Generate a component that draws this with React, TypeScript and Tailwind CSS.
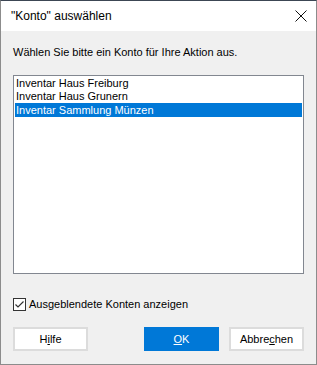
import React from "react";

export default function App() {
  const items = ["Inventar Haus Freiburg", "Inventar Haus Grunern", "Inventar Sammlung Münzen"];
  return (
    <div
      className="w-[317px] h-[365px] flex flex-col bg-[#f0f0f0] border border-[#8c8c8c] border-t-[#3c4654] text-[11px] text-black leading-none"
      style={{ fontFamily: '"Liberation Sans", Arial, sans-serif' }}
    >
      <div className="h-[30px] bg-white flex items-center justify-between pl-[10px] pr-[6px] shrink-0">
        <span className="text-[12px]">"Konto" auswählen</span>
        <svg width="16" height="16" viewBox="0 0 16 16" className="mr-[1px]">
          <path d="M2.5 2.5 L13.5 13.5 M13.5 2.5 L2.5 13.5" stroke="#111" strokeWidth="1" />
        </svg>
      </div>
      <div className="flex-1 flex flex-col px-[12px]">
        <div className="mt-[15px] h-[13px] flex items-center">Wählen Sie bitte ein Konto für Ihre Aktion aus.</div>
        <div className="mt-[16px] h-[199px] border border-[#828790] bg-white px-[1px] pt-[1px] flex flex-col">
          {items.map((t, i) => (
            <div
              key={t}
              className={
                "h-[13px] shrink-0 flex items-center pl-[1px] " +
                (i === 2 ? "bg-[#0078d7] text-white h-[14px]" : "")
              }
            >
              {t}
            </div>
          ))}
        </div>
        <div className="mt-[24px] flex items-center gap-[3px]">
          <div className="w-[13px] h-[13px] border border-[#333] bg-white flex items-center justify-center">
            <svg width="11" height="11" viewBox="0 0 11 11">
              <path d="M1.5 5.5 L4 8 L9.5 2.5" stroke="#333" strokeWidth="1.2" fill="none" />
            </svg>
          </div>
          <span>Ausgeblendete Konten anzeigen</span>
        </div>
        <div className="mt-[16px] flex items-center">
          <div className="w-[75px] h-[24px] bg-white border-2 border-[#dcdcdc] flex items-center justify-center">
            <span>
              H<span className="underline">i</span>lfe
            </span>
          </div>
          <div className="ml-[56px] w-[75px] h-[24px] bg-[#0078d7] text-white flex items-center justify-center">
            <span>
              <span className="underline">O</span>K
            </span>
          </div>
          <div className="ml-[10px] w-[75px] h-[24px] bg-white border-2 border-[#dcdcdc] flex items-center justify-center">
            <span>
              Abbre<span className="underline">c</span>hen
            </span>
          </div>
        </div>
      </div>
    </div>
  );
}
